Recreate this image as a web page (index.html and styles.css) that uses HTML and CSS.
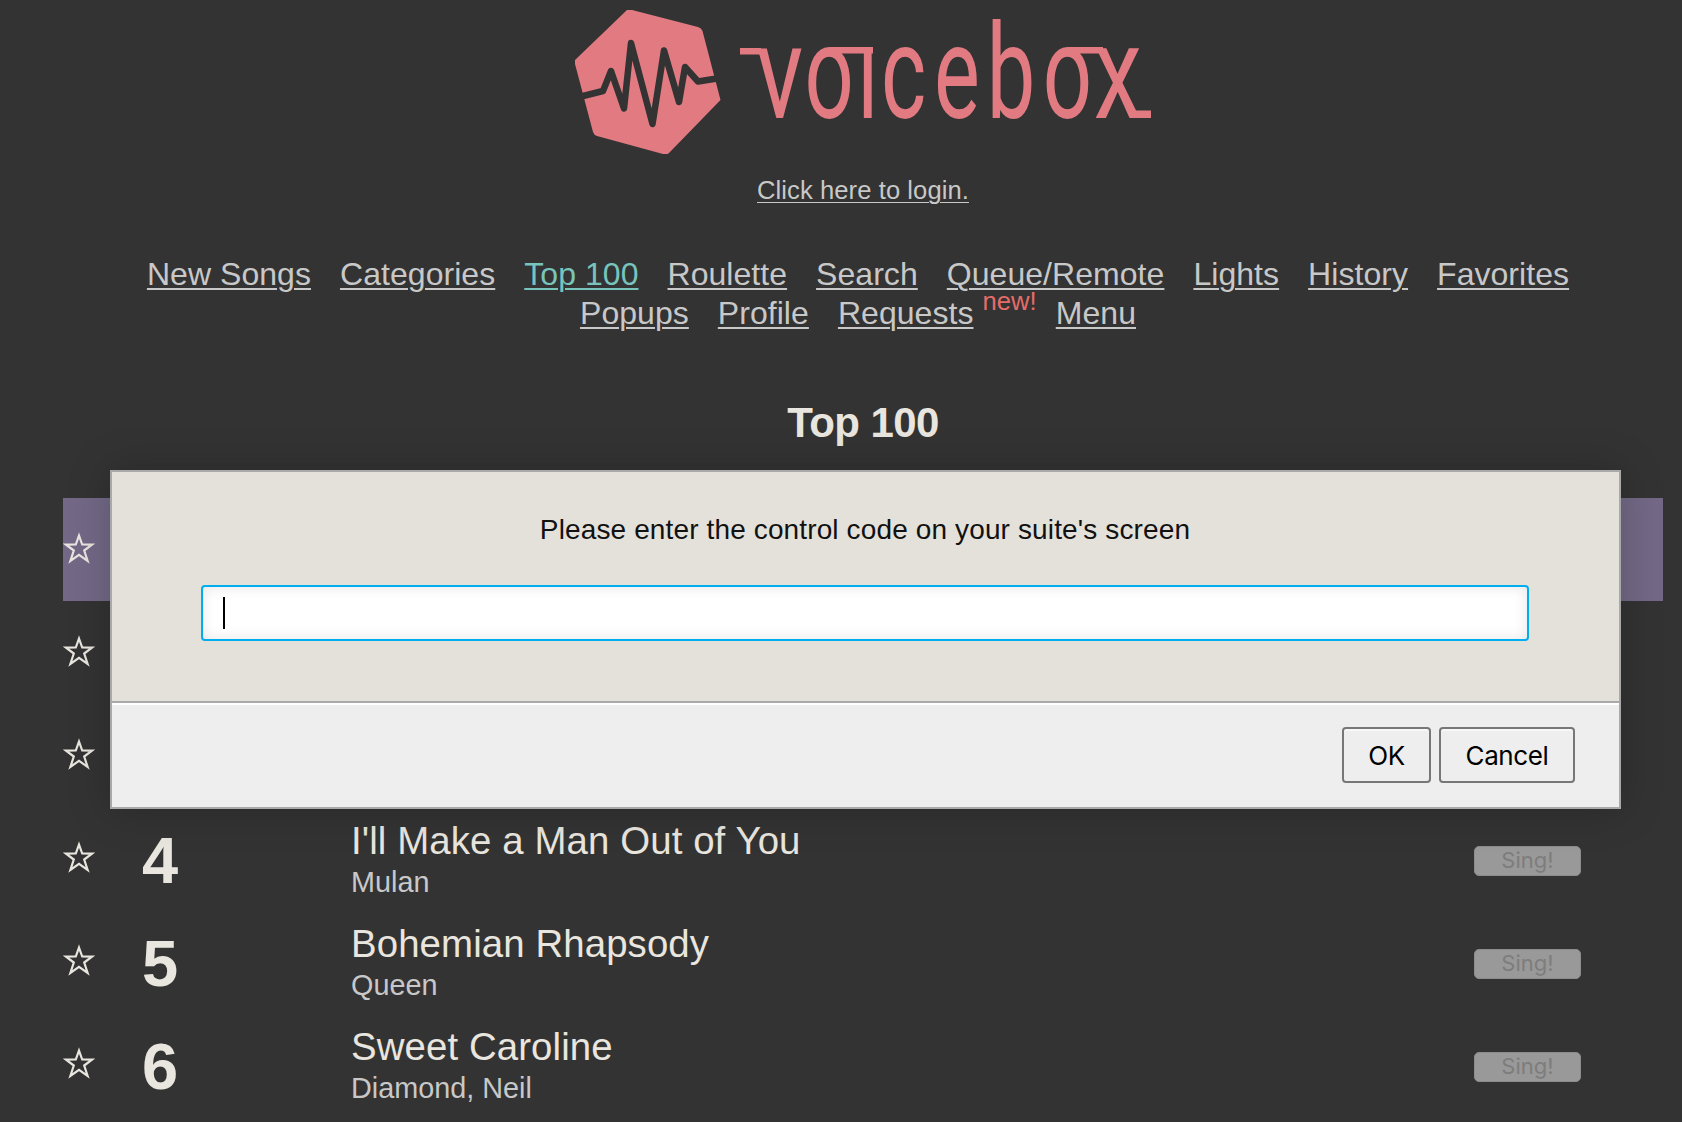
FILE: index.html
```html
<!DOCTYPE html>
<html lang="en">
<head>
<meta charset="utf-8">
<title>Voicebox - Top 100</title>
<link rel="stylesheet" href="styles.css">
</head>
<body>
<svg class="defs" aria-hidden="true">
  <symbol id="star" viewBox="0 0 32 32">
    <path d="M16 3.600 19.200 12.500 29 12.600 21.200 18.500 24.600 28.900 16 22.800 7.400 28.900 10.800 18.500 3 12.600 12.800 12.500Z" fill="none" stroke="currentColor" stroke-width="2.200" stroke-miterlimit="10"/>
  </symbol>
</svg>
<div class="page">
  <header class="header">
    <svg class="logo" viewBox="575 10 576 144" role="img" aria-label="voicebox">
      <path class="logo-fill" d="M627 10Q630 9 634 10.500L698 27Q701.500 28 702.500 31L720.500 100L669 153Q667 155 663 154L597 136Q594 135 593 132L575 64V60Z"/>
      <path class="logo-wave" d="M581 96.500 603 91 611 71 624 108.500 631 43 652.500 124 664 50.500 679 102 685 67 698 81.500 717 78.500"/>
      <text class="logo-word" transform="translate(0 117.500) scale(.74 1)" x="1022">v</text>
      <text class="logo-word" transform="translate(0 117.500) scale(.66 1)" x="1219 1299 1335 1415 1495 1580">oıcebo</text>
      <text class="logo-word" transform="translate(0 117.500) scale(.74 1)" x="1478">x</text>
      <path class="logo-fill" d="M740 48H761V54.500H740ZM830 47H873V53.500H830ZM1068 47H1103V53.500H1068ZM1134 110.500H1151V118H1134Z"/>
    </svg>
    <a class="login" href="#">Click here to login.</a>
  </header>
  <nav class="nav">
    <a href="#">New Songs</a>
    <a href="#">Categories</a>
    <a href="#" class="active">Top 100</a>
    <a href="#">Roulette</a>
    <a href="#">Search</a>
    <a href="#">Queue/Remote</a>
    <a href="#">Lights</a>
    <a href="#">History</a>
    <a href="#">Favorites</a>
    <a href="#">Popups</a>
    <a href="#">Profile</a>
    <span class="requests"><a href="#">Requests</a><span class="new">new!</span></span>
    <a href="#">Menu</a>
  </nav>
  <h1 class="title">Top 100</h1>
  <main class="songs">
    <div class="song selected"><svg class="star"><use href="#star"/></svg></div>
    <div class="song"><svg class="star"><use href="#star"/></svg></div>
    <div class="song"><svg class="star"><use href="#star"/></svg></div>
    <div class="song">
      <svg class="star"><use href="#star"/></svg>
      <div class="rank">4</div>
      <div class="info"><div class="name">I'll Make a Man Out of You</div><div class="artist">Mulan</div></div>
      <button class="sing" disabled>Sing!</button>
    </div>
    <div class="song">
      <svg class="star"><use href="#star"/></svg>
      <div class="rank">5</div>
      <div class="info"><div class="name">Bohemian Rhapsody</div><div class="artist">Queen</div></div>
      <button class="sing" disabled>Sing!</button>
    </div>
    <div class="song">
      <svg class="star"><use href="#star"/></svg>
      <div class="rank">6</div>
      <div class="info"><div class="name">Sweet Caroline</div><div class="artist">Diamond, Neil</div></div>
      <button class="sing" disabled>Sing!</button>
    </div>
  </main>
</div>
<div class="dialog" role="dialog">
  <div class="dialog-body">
    <div class="message">Please enter the control code on your suite's screen</div>
    <div class="field"><span class="caret"></span></div>
  </div>
  <div class="dialog-actions">
    <button class="btn ok">OK</button>
    <button class="btn cancel">Cancel</button>
  </div>
</div>
</body>
</html>
```
FILE: styles.css
```css
* { box-sizing: border-box; }
html, body { height: 100%; }
body {
  margin: 0;
  overflow: hidden;
  background: #333;
  color: #e9e5df;
  font-family: "Liberation Sans", Arial, sans-serif;
}
.defs { display: none; }
.page { width: 1600px; margin-left: 63px; padding-top: 10px; }
.header { display: flex; flex-direction: column; align-items: center; }
.logo { display: block; width: 576px; height: 144px; }
.logo-fill { fill: #e27a82; }
.logo-wave { fill: none; stroke: #333; stroke-width: 6.5; stroke-linejoin: round; }
.logo-word { font: 400 131px Roboto, sans-serif; fill: #e27a82; }
.login {
  margin-top: 21px;
  font-size: 25.6px;
  line-height: 30px;
  letter-spacing: .07px;
  color: #c8c8c8;
  text-decoration-thickness: 1px;
  text-underline-offset: 3px;
}
.nav {
  display: flex;
  flex-wrap: wrap;
  justify-content: center;
  column-gap: 29px;
  margin-top: 50px;
  padding: 0 80px 0 70px;
  font-size: 32px;
  line-height: 39px;
  letter-spacing: .05px;
}
.nav a { color: #c8c8c8; text-decoration-thickness: 2px; text-underline-offset: 3px; }
.nav .active { color: #77c4bd; }
.requests { display: flex; margin-right: -10px; }
.new { margin: 3px 0 0 9px; height: 24px; font-size: 25.6px; line-height: 9px; color: #e66c69; }
.title { margin: 66px 0 0; font-size: 42px; line-height: 48px; letter-spacing: -.6px; text-align: center; }
.songs { margin-top: 51px; }
.song { display: flex; align-items: center; height: 103px; padding-right: 82px; }
.song.selected { background: #736987; }
.star { flex: none; width: 32px; height: 32px; margin-bottom: 4px; }
.rank { width: 209px; margin: 4px 0 0 47px; font-size: 65px; font-weight: bold; line-height: 74px; }
.info { flex: 1; }
.name { font-size: 38.4px; line-height: 44px; margin-top: 1px; letter-spacing: .1px; }
.artist { margin-top: 2px; font-size: 28.8px; line-height: 34px; color: #c8c8c8; }
.sing {
  width: 107px;
  height: 30px;
  margin-top: 4px;
  padding: 0 0 2px;
  border: 1px solid #8c8c8c;
  border-radius: 5px;
  background: #999;
  color: #7d7d7d;
  font: 22px/26px Inter, sans-serif;
}
.dialog {
  position: absolute;
  left: 110px;
  top: 470px;
  width: 1511px;
  height: 339px;
  display: flex;
  flex-direction: column;
  border: 2px solid #a9a9a9;
  background: #e4e1da;
  box-shadow: 0 0 40px rgba(0, 0, 0, .22);
  color: #111;
}
.dialog-body { height: 229px; padding: 41px 90px 0 89px; }
.message { font-size: 28px; line-height: 34px; letter-spacing: .13px; text-align: center; }
.field {
  height: 56px;
  margin-top: 38px;
  padding: 10px 20px;
  border: 2px solid #00aeef;
  border-radius: 4px;
  background: #fff;
  box-shadow: inset 0 0 14px rgba(0, 0, 0, .1);
}
.caret { display: block; width: 2px; height: 32px; background: #000; }
.dialog-actions {
  flex: 1;
  display: flex;
  justify-content: flex-end;
  gap: 8px;
  padding: 24px 44px 0;
  border-top: 2px solid #a9a9a9;
  background: #eee;
  box-shadow: inset 0 2px #fff;
}
.btn {
  height: 56px;
  padding: 0;
  border: 2px solid #777;
  border-radius: 4px;
  background: #eee;
  box-shadow: inset 0 2px #f7f7f7;
  color: #000;
  font: 26px Inter, sans-serif;
  letter-spacing: -.4px;
}
.ok { width: 89px; }
.cancel { width: 136px; }
```
